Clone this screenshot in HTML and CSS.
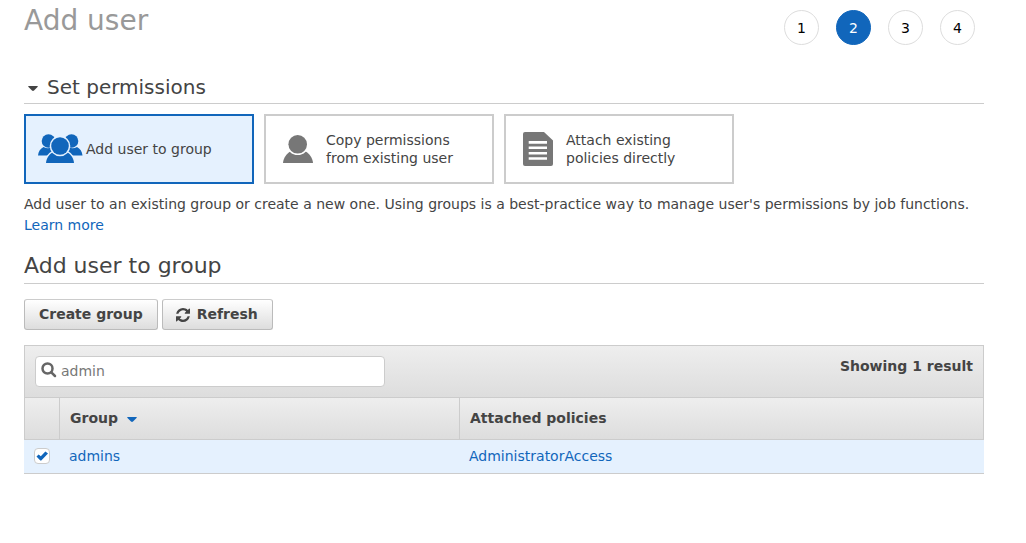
FILE: index.html
```html
<!DOCTYPE html>
<html lang="en">
<head>
<meta charset="utf-8">
<title>Add user</title>
<link rel="stylesheet" href="styles.css">
</head>
<body>
<main class="page">
  <header class="page-header">
    <h1 class="page-title">Add user</h1>
    <ol class="steps">
      <li class="step">1</li>
      <li class="step step-current" aria-current="step">2</li>
      <li class="step">3</li>
      <li class="step">4</li>
    </ol>
  </header>

  <h2 class="section-title">
    <button class="section-toggle" type="button" aria-expanded="true">
      <svg class="caret" viewBox="0 0 10 5" aria-hidden="true"><path d="M0.8 0H9.2Q10.4 0 9.5 1L6 4.5Q5 5.4 4 4.5L.5 1Q-.4 0 .8 0Z"/></svg>
      Set permissions
    </button>
  </h2>

  <div class="options">
    <button class="option option-selected" type="button" aria-pressed="true">
      <svg class="option-icon icon-group" viewBox="0 0 46 30" aria-hidden="true">
        <g>
          <circle cx="10.500" cy="7" r="6.800"/>
          <path d="M0 21.500C.3 17.500 2.500 14.500 5.500 13Q10 15.500 14 13L18 21.500Z"/>
          <circle cx="33.500" cy="7" r="6.800"/>
          <path d="M44.500 21.500C44.200 17.500 42 14.500 39 13Q34.500 15.500 30.500 13L26.500 21.500Z"/>
        </g>
        <g class="icon-front">
          <path d="M8 29C8.300 24.500 11 20.500 14.500 18.500H29.500C33 20.500 35.700 24.500 36 29Z"/>
          <circle cx="22" cy="12" r="8.800"/>
        </g>
      </svg>
      <span>Add user to group</span>
    </button>
    <button class="option" type="button" aria-pressed="false">
      <svg class="option-icon" viewBox="0 0 46 34" aria-hidden="true">
        <path d="M5 31C5.300 26 8.500 21.500 12.500 19.500H27.500C31.500 21.500 34.700 26 35 31Z"/>
        <circle class="icon-head" cx="19.700" cy="12.300" r="9.300"/>
      </svg>
      <span>Copy permissions from existing user</span>
    </button>
    <button class="option" type="button" aria-pressed="false">
      <svg class="option-icon" viewBox="0 0 46 34" aria-hidden="true">
        <path d="M7 0H26L35 8.500V32Q35 34 33 34H7Q5 34 5 32V2Q5 0 7 0Z"/>
        <path class="icon-lines" d="M10.700 10.400H29M10.700 15.800H29M10.700 21.200H29M10.700 26.500H29"/>
      </svg>
      <span>Attach existing policies directly</span>
    </button>
  </div>

  <p class="description">Add user to an existing group or create a new one. Using groups is a best-practice way to manage user's permissions by job functions. <a class="link" href="#learn">Learn more</a></p>

  <h2 class="group-title">Add user to group</h2>

  <div class="actions">
    <button class="button" type="button">Create group</button>
    <button class="button button-refresh" type="button">
      <svg class="refresh-icon" viewBox="0 0 1536 1536" aria-hidden="true"><path d="M1511 928q0 5-1 7-64 268-268 434.500T764 1536q-146 0-282.500-55T238 1324l-129 129q-19 19-45 19t-45-19-19-45V960q0-26 19-45t45-19h448q26 0 45 19t19 45-19 45l-137 137q71 66 161 102t187 36q134 0 250-65t186-179q11-17 53-117 8-23 30-23h192q13 0 22.500 9.500t9.500 22.500zm25-800v448q0 26-19 45t-45 19h-448q-26 0-45-19t-19-45 19-45l138-138Q969 256 768 256q-134 0-250 65T332 500q-11 17-53 117-8 23-30 23H50q-13 0-22.500-9.500T18 608v-7q65-268 270-434.500T768 0q146 0 284 55.500T1297 212l130-129q19-19 45-19t45 19 19 45z"/></svg>
      Refresh
    </button>
  </div>

  <section class="groups">
    <div class="toolbar">
      <div class="search">
        <svg class="search-icon" viewBox="0 0 16 16" aria-hidden="true"><circle cx="6.500" cy="6.500" r="5"/><path d="M10.300 10.300L14 14"/></svg>
        <input class="search-input" type="text" value="admin" aria-label="Search groups">
      </div>
      <span class="result-count">Showing 1 result</span>
    </div>
    <table class="table">
      <colgroup><col class="col-check"><col class="col-group"><col></colgroup>
      <thead>
        <tr>
          <th scope="col" aria-label="Selected"></th>
          <th scope="col">Group <svg class="caret caret-sort" viewBox="0 0 10 5" aria-hidden="true"><path d="M0.8 0H9.2Q10.4 0 9.5 1L6 4.5Q5 5.4 4 4.5L.5 1Q-.4 0 .8 0Z"/></svg></th>
          <th scope="col">Attached policies</th>
        </tr>
      </thead>
      <tbody>
        <tr>
          <td class="cell-check"><input class="checkbox" type="checkbox" checked aria-label="Select admins"></td>
          <td><a class="link" href="#admins">admins</a></td>
          <td><a class="link" href="#policy">AdministratorAccess</a></td>
        </tr>
      </tbody>
    </table>
  </section>
</main>
</body>
</html>
```
FILE: styles.css
```css
* { box-sizing: border-box; }

body {
  margin: 0;
  background: #fff;
  color: #444;
  font: 14px/21px "DejaVu Sans", sans-serif;
}

button, input { font: inherit; color: inherit; }

.page { padding: 0 42px 0 24px; }

.page-header {
  display: flex;
  justify-content: space-between;
  align-items: flex-start;
}

.page-title {
  margin: 5px 0 0;
  color: #999;
  font-size: 28px;
  font-weight: 400;
  line-height: 32px;
}

.steps {
  display: flex;
  gap: 17px;
  margin: 10px 9px 0 0;
  padding: 0;
  list-style: none;
}

.step {
  width: 35px;
  height: 35px;
  border: 1px solid #ddd;
  border-radius: 50%;
  color: #000;
  line-height: 35px;
  text-align: center;
}

.step-current {
  border-color: #1166bb;
  background: #1166bb;
  color: #fff;
}

.section-title {
  margin: 29px 0 0;
  border-bottom: 1px solid #ccc;
  font-weight: 400;
  font-size: 20px;
  line-height: 26px;
}

.section-toggle {
  display: flex;
  align-items: center;
  gap: 9px;
  padding: 0 4px 3px;
  border: 0;
  background: none;
}

.caret {
  width: 10px;
  height: 5px;
  margin-top: 3px;
  fill: currentColor;
}

.caret-sort {
  margin: 0 0 0 4px;
  color: #1166bb;
}

.options {
  display: flex;
  gap: 10px;
  margin-top: 10px;
}

.option {
  display: flex;
  align-items: center;
  gap: 2px;
  width: 230px;
  min-height: 70px;
  padding: 0 32px 0 12px;
  border: 2px solid #ccc;
  background: #fff;
  line-height: 18px;
  text-align: left;
}

.option-selected {
  border-color: #1166bb;
  background: #e5f1fe;
}

.option-icon {
  flex: none;
  width: 46px;
  height: 34px;
  fill: #777;
}

.icon-group {
  height: 30px;
  fill: #1166bb;
}

.icon-front {
  stroke: #e5f1fe;
  stroke-width: 3px;
  paint-order: stroke;
}

.icon-head {
  stroke: #fff;
  stroke-width: 3px;
  paint-order: stroke;
}

.icon-lines {
  stroke: #fff;
  stroke-width: 2.600px;
}

.description { margin: 10px 0 0; }

.link {
  color: #1166bb;
  text-decoration: none;
}

.group-title {
  margin: 16px 0 0;
  padding-bottom: 3px;
  border-bottom: 1px solid #ccc;
  font-size: 22px;
  font-weight: 400;
  line-height: 28px;
}

.actions {
  display: flex;
  gap: 4px;
  margin: 15px 0;
}

.button {
  display: flex;
  align-items: center;
  gap: 7px;
  height: 31px;
  padding: 0 14px;
  border: 1px solid #bbb;
  border-top-color: #ccc;
  border-radius: 3px;
  background: linear-gradient(#fff, #ddd);
  font-weight: 700;
}

.button-refresh { padding-left: 13px; }

.refresh-icon {
  width: 14px;
  height: 14px;
  fill: #444;
}

.toolbar {
  display: flex;
  justify-content: space-between;
  align-items: flex-start;
  padding: 10px;
  border: 1px solid #ccc;
  border-bottom: 0;
  background: linear-gradient(#eee, #ddd);
}

.search {
  display: flex;
  align-items: center;
  gap: 4px;
  width: 350px;
  height: 31px;
  padding: 0 5px;
  border: 1px solid #ccc;
  border-radius: 4px;
  background: #fff;
}

.search-icon {
  flex: none;
  width: 16px;
  height: 16px;
  margin-bottom: 3px;
  fill: none;
  stroke: #666;
  stroke-width: 2.500px;
  stroke-linecap: round;
}

.search-input {
  flex: 1;
  min-width: 0;
  padding: 0;
  border: 0;
  outline: 0;
  background: none;
  color: #777;
}

.result-count { font-weight: 700; }

.table {
  width: 100%;
  border-collapse: separate;
  border-spacing: 0;
  table-layout: fixed;
}

.col-check { width: 36px; }
.col-group { width: 400px; }

.table th {
  height: 43px;
  padding: 0 10px;
  border: solid #ccc;
  border-width: 1px 1px 1px 0;
  background: linear-gradient(#eee, #ddd);
  text-align: left;
}

.table th:first-child { border-left-width: 1px; }

.table td {
  height: 34px;
  padding: 0 9px;
  border-bottom: 1px solid #ccc;
  background: #e5f1fe;
}

.caret-sort { vertical-align: 1px; }

.table .cell-check { padding: 0 10px 1px; }

.checkbox {
  display: grid;
  place-items: center;
  width: 16px;
  height: 16px;
  margin: 0;
  border: 1px solid #ccc;
  border-radius: 4px;
  background: #fff;
  appearance: none;
}

.checkbox:checked::before {
  content: "";
  width: 12px;
  height: 10px;
  background: #1166bb;
  clip-path: polygon(4% 56%, 22% 36%, 40% 52%, 78% 4%, 100% 24%, 44% 96%, 36% 96%);
}
```
